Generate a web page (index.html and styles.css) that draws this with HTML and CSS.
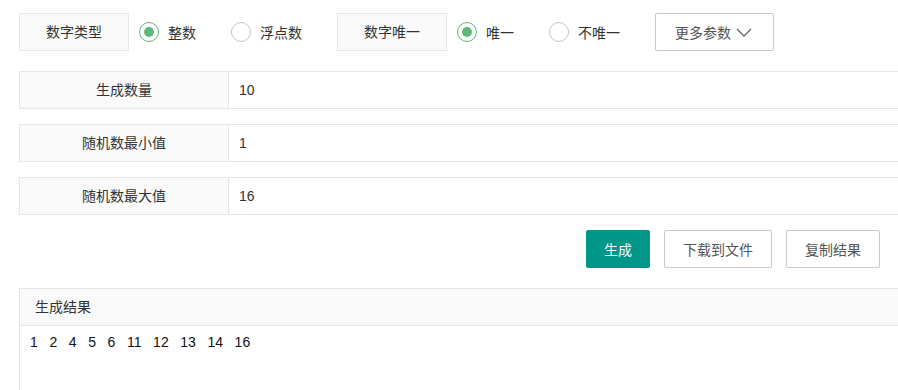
FILE: index.html
```html
<!DOCTYPE html>
<html>
<head>
  <meta charset="utf-8">
  <title>随机数生成</title>
  <link rel="stylesheet" href="styles.css">
</head>
<body>
  <div class="page">
    <div class="options">
      <div class="tag">数字类型</div>
      <label class="radio checked"><span class="dot"></span>整数</label>
      <label class="radio"><span class="dot"></span>浮点数</label>
      <div class="tag">数字唯一</div>
      <label class="radio checked"><span class="dot"></span>唯一</label>
      <label class="radio"><span class="dot"></span>不唯一</label>
      <button class="btn more">更多参数
        <svg width="16" height="9" viewBox="0 0 16 9"><polyline points="1,1 8,8 15,1" fill="none" stroke="#666" stroke-width="1.3"/></svg>
      </button>
    </div>

    <div class="field">
      <div class="field-label">生成数量</div>
      <div class="field-value">10</div>
    </div>
    <div class="field">
      <div class="field-label">随机数最小值</div>
      <div class="field-value">1</div>
    </div>
    <div class="field">
      <div class="field-label">随机数最大值</div>
      <div class="field-value">16</div>
    </div>

    <div class="actions">
      <button class="btn primary">生成</button>
      <button class="btn">下载到文件</button>
      <button class="btn">复制结果</button>
    </div>

    <div class="panel">
      <div class="panel-head">生成结果</div>
      <div class="panel-body">
        <span>1</span><span>2</span><span>4</span><span>5</span><span>6</span><span>11</span><span>12</span><span>13</span><span>14</span><span>16</span>
      </div>
    </div>
  </div>
</body>
</html>
```

FILE: styles.css
```css
body {
  margin: 0;
  font-family: "Liberation Sans", "Noto Sans CJK SC", sans-serif;
  font-size: 14px;
  color: #333;
  background: #fff;
  overflow: hidden;
}

.page {
  width: 1000px;
  padding: 13px 0 0 19px;
}

.options {
  display: flex;
  align-items: center;
  height: 38px;
}

.tag {
  width: 108px;
  height: 36px;
  line-height: 36px;
  text-align: center;
  background: #fafafa;
  border: 1px solid #e6e6e6;
  margin-right: 10px;
}

.radio {
  display: flex;
  align-items: center;
  margin-right: 35px;
}

.radio .dot {
  width: 18px;
  height: 18px;
  border: 1px solid #c2c2c2;
  border-radius: 50%;
  margin-right: 9px;
  position: relative;
}

.radio.checked .dot {
  border-color: #5fb878;
}

.radio.checked .dot::after {
  content: "";
  position: absolute;
  left: 4px;
  top: 4px;
  width: 10px;
  height: 10px;
  border-radius: 50%;
  background: #5fb878;
}

.btn {
  height: 38px;
  padding: 0 18px;
  border: 1px solid #c9c9c9;
  border-radius: 2px;
  background: #fff;
  color: #555;
  font-family: inherit;
  font-size: 14px;
  display: inline-flex;
  align-items: center;
}

.btn.more {
  width: 119px;
  padding: 0 0 0 19px;
}

.btn.more svg {
  margin-left: 5px;
}

.btn.primary {
  background: #009688;
  border-color: #009688;
  color: #fff;
  padding: 0 17px;
}

.field {
  display: flex;
  height: 36px;
  border: 1px solid #e6e6e6;
  margin-top: 20px;
}

.field + .field {
  margin-top: 15px;
}

.field-label {
  width: 208px;
  background: #fafafa;
  border-right: 1px solid #e6e6e6;
  text-align: center;
  line-height: 36px;
}

.field-value {
  padding-left: 10px;
  line-height: 36px;
}

.actions {
  display: flex;
  justify-content: flex-end;
  gap: 14px;
  width: 861px;
  margin-top: 15px;
}

.panel {
  margin-top: 20px;
  border: 1px solid #e6e6e6;
  height: 120px;
}

.panel-head {
  height: 36px;
  line-height: 36px;
  padding-left: 15px;
  background: #fafafa;
  border-bottom: 1px solid #e6e6e6;
}

.panel-body {
  display: flex;
  gap: 11.6px;
  padding: 6px 10px;
  line-height: 20px;
  color: #111;
}
```
